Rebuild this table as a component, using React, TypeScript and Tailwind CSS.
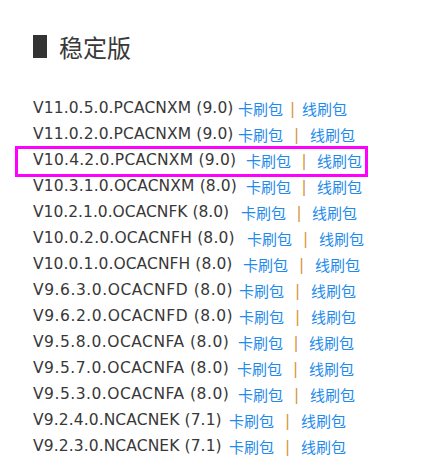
const rows = [
  { v: "V11.0.5.0.PCACNXM (9.0)", w: "w-[205px] tracking-[0.1px]", sep: "w-[19px]" },
  { v: "V11.0.2.0.PCACNXM (9.0)", w: "w-[205px] tracking-[0.1px]", sep: "w-[27px]" },
  { v: "V10.4.2.0.PCACNXM (9.0)", w: "w-[213px] tracking-[0.22px]", sep: "w-[26px]", mark: true },
  { v: "V10.3.1.0.OCACNXM (8.0)", w: "w-[213px] tracking-[0.13px]", sep: "w-[26px]" },
  { v: "V10.2.1.0.OCACNFK (8.0)", w: "w-[208px] tracking-[0px]", sep: "w-[26px]" },
  { v: "V10.0.2.0.OCACNFH (8.0)", w: "w-[214px] tracking-[0.18px]", sep: "w-[27px]" },
  { v: "V10.0.1.0.OCACNFH (8.0)", w: "w-[210px] tracking-[0.08px]", sep: "w-[27px]" },
  { v: "V9.6.3.0.OCACNFD (8.0)", w: "w-[206px] tracking-[0.55px]", sep: "w-[27px]" },
  { v: "V9.6.2.0.OCACNFD (8.0)", w: "w-[206px] tracking-[0.55px]", sep: "w-[27px]" },
  { v: "V9.5.8.0.OCACNFA (8.0)", w: "w-[205px] tracking-[0.5px]", sep: "w-[26px]" },
  { v: "V9.5.7.0.OCACNFA (8.0)", w: "w-[204px] tracking-[0.5px]", sep: "w-[27px]" },
  { v: "V9.5.3.0.OCACNFA (8.0)", w: "w-[205px] tracking-[0.5px]", sep: "w-[27px]" },
  { v: "V9.2.4.0.NCACNEK (7.1)", w: "w-[196px] tracking-[0.1px]", sep: "w-[27px]" },
  { v: "V9.2.3.0.NCACNEK (7.1)", w: "w-[196px] tracking-[0.1px]", sep: "w-[27px]" },
];

export default function App() {
  return (
    <div className="min-h-[466px] w-[424px] bg-white pl-[33px] pt-[35px] font-['DejaVu_Sans','Noto_Sans_CJK_SC',sans-serif] text-[#383838]">
      <h2 className="flex h-[23px] items-center gap-[12px] text-[24px] leading-none">
        <span className="h-[23px] w-[14px] bg-[#333]" />
        <span className="font-['Noto_Sans_CJK_SC',sans-serif]">稳定版</span>
      </h2>

      <ul className="mt-[38px]">
        {rows.map((r) => (
          <li key={r.v} className="relative flex h-[26px] items-center whitespace-nowrap text-[15.5px]">
            {r.mark && (
              <span className="absolute -left-[18px] -top-[2px] h-[31px] w-[353px] border-[3px] border-[#ff00ff]" />
            )}
            <span className={r.w}>{r.v}</span>
            <a className="font-['Noto_Sans_CJK_SC',sans-serif] text-[15px] text-[#1e8bec]">卡刷包</a>
            <span className={`${r.sep} text-center text-[15px] text-[#d4923a]`}>|</span>
            <a className="font-['Noto_Sans_CJK_SC',sans-serif] text-[15px] text-[#1e8bec]">线刷包</a>
          </li>
        ))}
      </ul>
    </div>
  );
}
